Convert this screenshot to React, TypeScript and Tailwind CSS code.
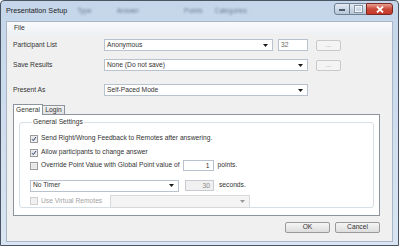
import React from 'react';

/* Small dropdown arrow used by the combo boxes */
function Arrow({ dim }: { dim?: boolean }) {
  return (
    <svg width="5" height="3" viewBox="0 0 5 3" className="shrink-0">
      <path d="M0 0h5L2.5 3z" fill={dim ? '#9a9a9a' : '#1a1a1a'} />
    </svg>
  );
}

function Combo({ text, w, dim }: { text: string; w: string; dim?: boolean }) {
  return (
    <div
      className={`${w} h-[12px] flex items-center justify-between pl-[2px] pr-[4px] border ${
        dim ? 'bg-[#f4f4f4] border-[#d9d9d9]' : 'bg-white border-[#b9c3cf]'
      }`}
    >
      <span className="leading-none">{text}</span>
      <Arrow dim={dim} />
    </div>
  );
}

function Check({ on, dim }: { on?: boolean; dim?: boolean }) {
  return (
    <svg width="8" height="8" viewBox="0 0 8 8" className="shrink-0">
      <rect x="0.5" y="0.5" width="7" height="7" fill={dim ? '#f2f2f2' : '#f6f6f6'} stroke={dim ? '#cfcfcf' : '#9a9b9b'} />
      <rect x="1.5" y="1.5" width="5" height="5" fill={dim ? '#f0f0f0' : '#e6e6e6'} />
      {on ? <path d="M2 4.2l1.3 1.4L6 2" stroke="#2a3f7a" strokeWidth="1" fill="none" /> : null}
    </svg>
  );
}

function SmallButton() {
  return (
    <div className="w-[25px] h-[11px] border border-[#c9c9c9] bg-[#f4f4f4] rounded-[2px] flex items-center justify-center text-[#a0a0a0] leading-none">
      ...
    </div>
  );
}

function DialogButton({ label }: { label: string }) {
  return (
    <div className="w-[45px] h-[11px] border border-[#9a9a9a] rounded-[2px] bg-gradient-to-b from-[#f5f5f5] to-[#dedede] flex items-center justify-center leading-none">
      {label}
    </div>
  );
}

export default function App() {
  return (
    <div
      className="w-[400px] h-[247px] overflow-hidden bg-white text-[6.7px] text-[#333]"
      style={{ fontFamily: '"Liberation Sans", Arial, sans-serif' }}
    >
      {/* window frame */}
      <div className="w-[399px] h-[246px] flex flex-col border border-[#4a5563] rounded-t-[4px] bg-gradient-to-b from-[#c5d6ea] to-[#d9e5f2]">
        {/* title bar */}
        <div className="h-[20px] flex items-start pl-[5px] pr-[5px]">
          <span className="mt-[6px] text-[7.2px] text-[#1b1b1b] leading-none">Presentation Setup</span>
          <span className="mt-[7px] ml-[10px] text-[#6b7d92] blur-[0.8px] leading-none">Type</span>
          <span className="mt-[7px] ml-[25px] text-[#6b7d92] blur-[0.8px] leading-none">Answer</span>
          <span className="mt-[7px] ml-[45px] text-[#6b7d92] blur-[0.8px] leading-none">Points</span>
          <span className="mt-[7px] ml-[12px] text-[#6b7d92] blur-[0.8px] leading-none">Categories</span>
          <div className="ml-auto mt-[2px] flex">
            <div className="w-[16px] h-[12px] border border-[#6f7f92] rounded-l-[3px] bg-gradient-to-b from-[#e3ebf4] to-[#b7c6d8] flex items-end justify-center pb-[3px]">
              <div className="w-[6px] h-[2px] bg-white border border-[#4d5a6a]" />
            </div>
            <div className="w-[16px] h-[12px] border-y border-[#6f7f92] bg-gradient-to-b from-[#e3ebf4] to-[#b7c6d8] flex items-center justify-center">
              <div className="w-[7px] h-[6px] border border-[#f4f7fa] outline outline-[#8896a8]" />
            </div>
            <div className="w-[27px] h-[12px] border border-[#7a2a22] rounded-r-[3px] bg-gradient-to-b from-[#e8a093] via-[#c9493a] to-[#c7372a] flex items-center justify-center">
              <svg width="8" height="7" viewBox="0 0 8 7">
                <path d="M1 0.5l6 6M7 0.5l-6 6" stroke="#ffffff" strokeWidth="1.8" />
              </svg>
            </div>
          </div>
        </div>

        {/* client area */}
        <div className="ml-[5px] mr-[5px] h-[221px] flex flex-col bg-[#f0f0f0] border border-[#a8b6c6]">
          {/* menu bar */}
          <div className="h-[12px] shrink-0 flex items-center pl-[7px] bg-gradient-to-b from-[#f9fafc] to-[#eef1f5]">
            <span className="leading-none">File</span>
          </div>

          <div className="flex flex-col pl-[6px]">
            <div className="mt-[5px] flex items-center">
              <span className="w-[91px] leading-none">Participant List</span>
              <Combo text="Anonymous" w="w-[169px]" />
              <div className="ml-[5px] w-[30px] h-[12px] bg-white border border-[#b9c3cf] flex items-center pl-[2px] text-[#666]">32</div>
              <div className="ml-[8px]">
                <SmallButton />
              </div>
            </div>

            <div className="mt-[8px] flex items-center">
              <span className="w-[91px] leading-none">Save Results</span>
              <Combo text="None (Do not save)" w="w-[204px]" />
              <div className="ml-[8px]">
                <SmallButton />
              </div>
            </div>

            <div className="mt-[13px] flex items-center">
              <span className="w-[91px] leading-none">Present As</span>
              <Combo text="Self-Paced Mode" w="w-[204px]" />
            </div>

            {/* tabs */}
            <div className="mt-[8px] flex items-end h-[10px]">
              <div className="h-[11px] w-[30px] -mb-[1px] bg-white border border-b-0 border-[#8e949e] flex items-center justify-center leading-none relative z-10">
                General
              </div>
              <div className="h-[9px] w-[22px] bg-gradient-to-b from-[#f2f2f2] to-[#e0e0e0] border border-l-0 border-b-0 border-[#8e949e] flex items-center justify-center leading-none">
                Login
              </div>
            </div>

            {/* tab panel */}
            <div className="w-[367px] h-[102px] bg-white border border-[#8e949e] flex flex-col px-[5px] pt-[4px]">
              <fieldset className="h-[89px] border border-[#d5dfe5] rounded-[3px] px-[10px]">
                <legend className="ml-[2px] px-[1px] leading-none">General Settings</legend>
                <div className="flex flex-col">
                  <div className="mt-[7px] h-[12px] flex items-center gap-[3px]">
                    <Check on />
                    <span className="leading-none">Send Right/Wrong Feedback to Remotes after answering.</span>
                  </div>
                  <div className="mt-[2px] h-[12px] flex items-center gap-[3px]">
                    <Check on />
                    <span className="leading-none">Allow participants to change answer</span>
                  </div>
                  <div className="mt-[1px] h-[12px] flex items-center gap-[3px]">
                    <Check />
                    <span className="leading-none">Override Point Value with Global Point value of</span>
                    <div className="w-[31px] h-[11px] bg-white border border-[#b9c3cf] flex items-center justify-end pr-[3px]">1</div>
                    <span className="ml-[1px] leading-none">points.</span>
                  </div>
                  <div className="mt-[8px] h-[12px] flex items-center">
                    <Combo text="No Timer" w="w-[149px]" />
                    <div className="ml-[6px] w-[29px] h-[11px] bg-[#f0f0f0] border border-[#c8ccd2] flex items-center justify-end pr-[3px] text-[#888]">30</div>
                    <span className="ml-[5px] leading-none">seconds.</span>
                  </div>
                  <div className="mt-[3px] h-[13px] flex items-center gap-[3px]">
                    <Check dim />
                    <span className="leading-none text-[#a3a3a3] w-[66px]">Use Virtual Remotes</span>
                    <div className="w-[140px] h-[13px] bg-[#f4f4f4] border border-[#d9d9d9] flex items-center justify-end pr-[4px]">
                      <Arrow dim />
                    </div>
                  </div>
                </div>
              </fieldset>
            </div>

            {/* dialog buttons */}
            <div className="mt-[6px] w-[367px] flex justify-end gap-[5px]">
              <DialogButton label="OK" />
              <DialogButton label="Cancel" />
            </div>
          </div>
        </div>
      </div>
    </div>
  );
}
